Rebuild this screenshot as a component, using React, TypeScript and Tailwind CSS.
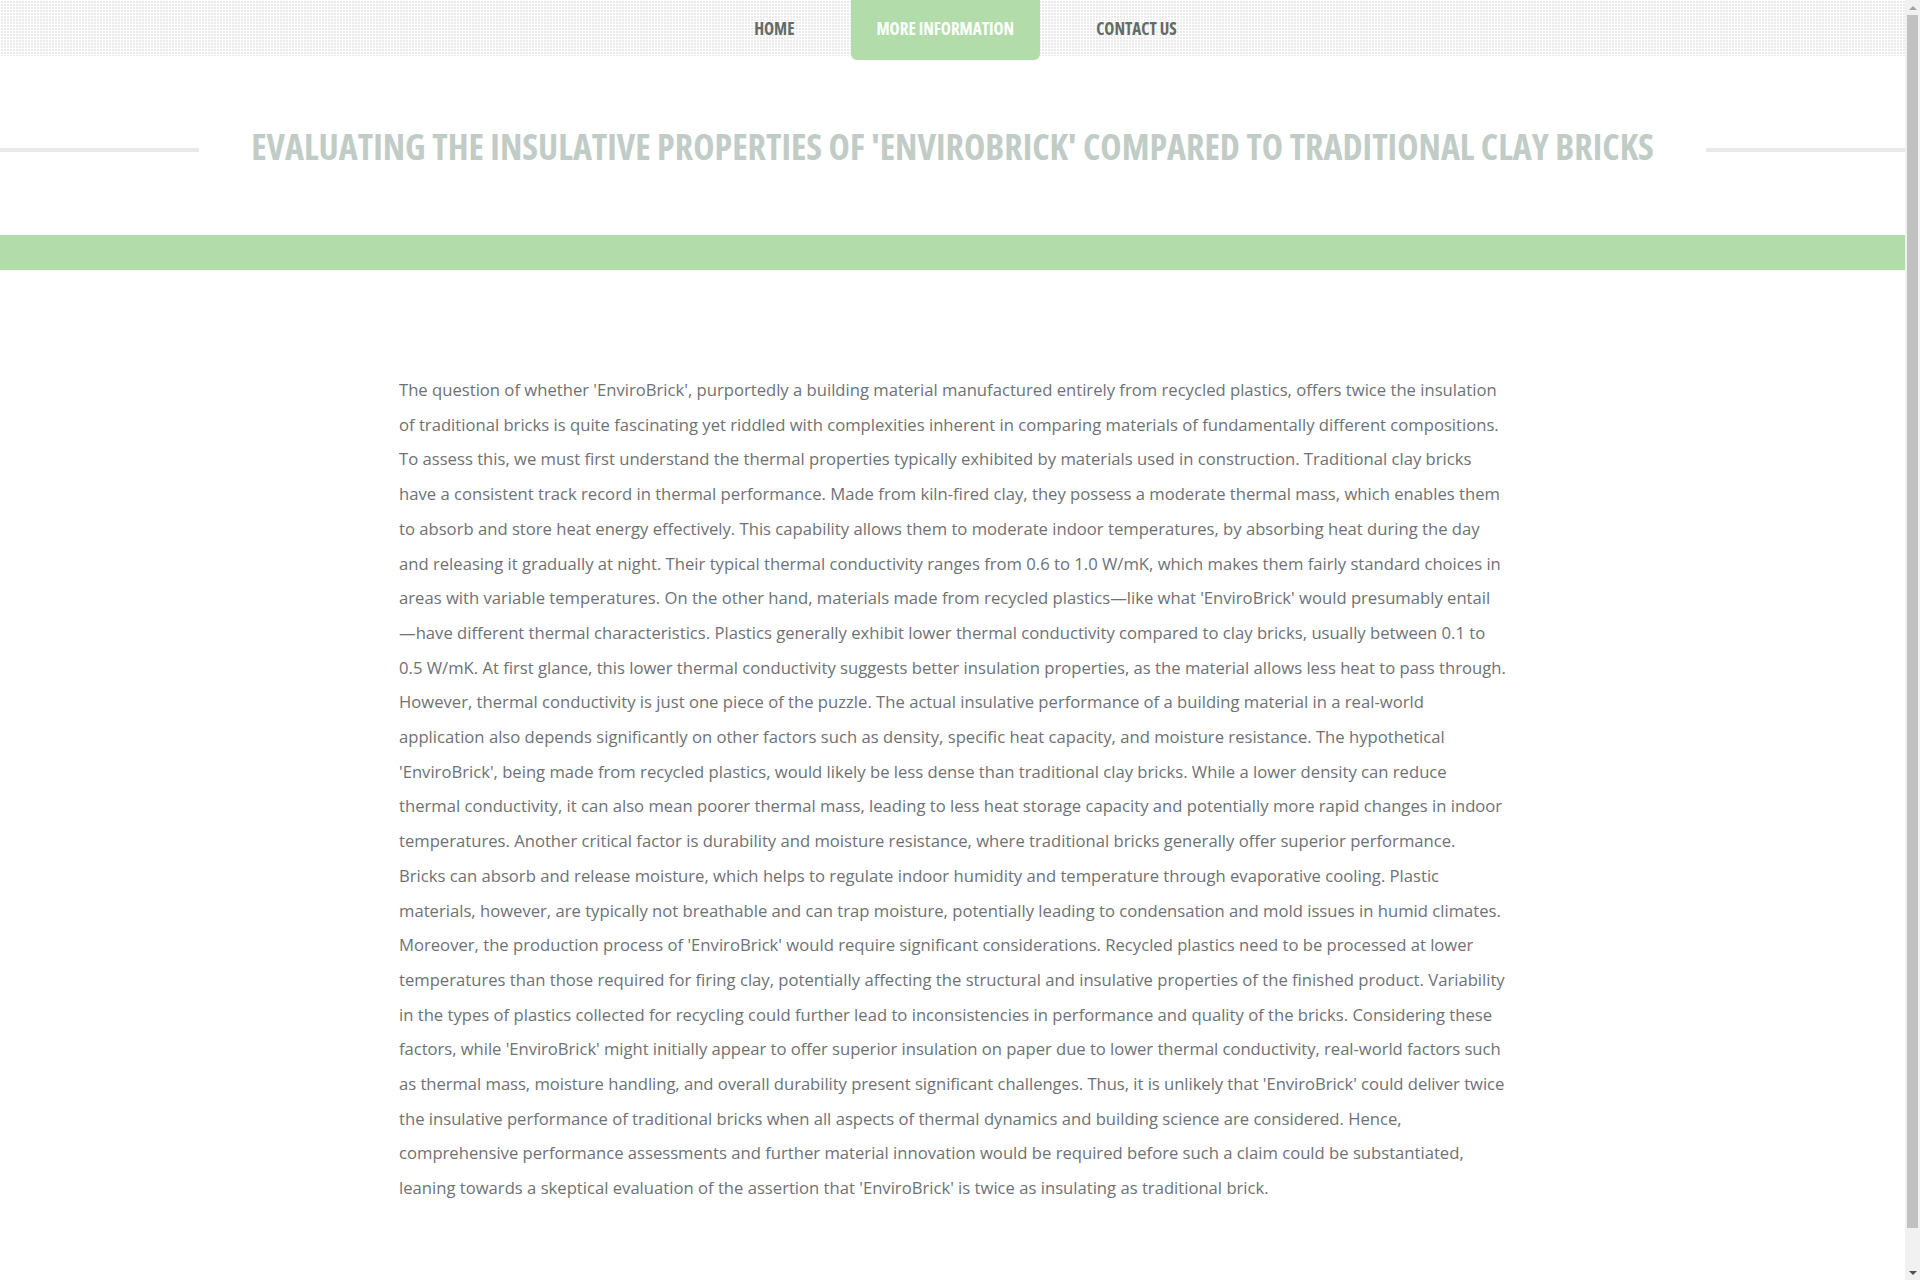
import React from "react";

const navItems = [
  { label: "HOME", active: false },
  { label: "MORE INFORMATION", active: true },
  { label: "CONTACT US", active: false },
];

const bodyStart =
  "The question of whether 'EnviroBrick', purportedly a building material manufactured entirely from recycled plastics, offers twice the insulation of traditional bricks is quite fascinating yet riddled with complexities inherent in comparing materials of fundamentally different compositions. To assess this, we must first understand the thermal properties typically exhibited by materials used in construction. Traditional clay bricks have a consistent track record in thermal performance. Made from kiln-fired clay, they possess a moderate thermal mass, which enables them to absorb and store heat energy effectively. This capability allows them to moderate indoor temperatures, by absorbing heat during the day and releasing it gradually at night. Their typical thermal conductivity ranges from 0.6 to 1.0 W/mK, which makes them fairly standard choices in areas with variable temperatures. On the other hand, materials made from recycled plastics\u2014like what 'EnviroBrick' would presumably entail\u2014\u2060have different thermal characteristics. Plastics generally exhibit lower thermal conductivity compared to clay bricks, usually between 0.1 to 0.5 W/mK. At first glance, this lower thermal conductivity suggests better insulation properties, as the material allows less heat to pass through. However, thermal conductivity is just one piece of the puzzle. The actual insulative performance of a building material in a real-world application also depends significantly on other factors such as density, specific heat capacity, and moisture resistance. The hypothetical 'EnviroBrick', being made from recycled plastics, would likely be less dense than traditional clay bricks. While a lower density can reduce thermal conductivity, it can also mean poorer thermal mass, leading to less heat storage capacity and potentially more rapid changes in indoor temperatures. Another critical factor is durability and moisture resistance, where traditional bricks generally offer superior performance. Bricks can absorb and release moisture, which helps to regulate indoor humidity and temperature through evaporative cooling. Plastic materials, however, are typically not breathable and can trap moisture, potentially leading to condensation and mold issues in humid climates. Moreover, the production process of 'EnviroBrick' would require significant considerations. Recycled plastics need to be processed at lower temperatures than those required for firing clay, potentially affecting the structural and insulative properties of the finished product. Variability in the types of plastics collected for recycling could further lead to inconsistencies in performance and quality of the bricks. Considering these ";

// slightly tighter tracking here so the wrap matches the original rendering
const bodyTight =
  "factors, while 'EnviroBrick' might initially appear to offer superior insulation on paper due to lower thermal conductivity, real-world factors such as thermal mass, moisture handling, and overall durability present significant challenges. Thus, it is unlikely that 'EnviroBrick' could deliver twice";

const bodyEnd =
  " the insulative performance of traditional bricks when all aspects of thermal dynamics and building science are considered. Hence, comprehensive performance assessments and further material innovation would be required before such a claim could be substantiated, leaning towards a skeptical evaluation of the assertion that 'EnviroBrick' is twice as insulating as traditional brick.";

const Scrollbar = () => (
  <aside className="w-[15px] shrink-0 flex flex-col bg-[#f1f1f1]">
    <div className="h-[15px] flex items-center justify-center">
      <div className="w-0 h-0 border-x-[4px] border-x-transparent border-b-[4px] border-b-[#a3a3a3]" />
    </div>
    <div className="h-[1213px] mx-[2px] bg-[#c1c1c1]" />
    <div className="flex-1" />
    <div className="h-[15px] flex items-center justify-center">
      <div className="w-0 h-0 border-x-[4px] border-x-transparent border-t-[4px] border-t-[#505050]" />
    </div>
  </aside>
);

export default function App() {
  return (
    <div className="h-screen flex overflow-hidden bg-white font-['Open_Sans',sans-serif]">
      <div className="flex-1 min-w-0 overflow-hidden">
        {/* Top nav */}
        <header className="h-[56px] bg-[#ebebeb] bg-[image:linear-gradient(to_right,#ffffff_1px,transparent_1px),linear-gradient(to_bottom,#ffffff_1px,transparent_1px)] bg-[size:3px_3px]">
          <nav className="flex justify-center items-start gap-[30px] pl-[26px]">
            {navItems.map((item) => (
              <a
                key={item.label}
                href="#"
                className={
                  item.active
                    ? "h-[60px] pb-[3px] px-[26px] flex items-center bg-[#b2ddab] rounded-b-[6px] text-white text-[17px] font-bold [font-stretch:75%]"
                    : "h-[57px] px-[26px] flex items-center text-[#626c69] text-[17px] font-bold [font-stretch:75%]"
                }
              >
                {item.label}
              </a>
            ))}
          </nav>
        </header>

        {/* Title */}
        <section className="h-[179px] pt-[9px] flex items-center">
          <div className="flex-1 h-[4px] bg-[#e8e9e8]" />
          <h1 className="px-[52px] mb-[6px] text-[#c2ccc7] text-[36px] font-bold [font-stretch:75%] leading-none whitespace-nowrap">
            EVALUATING THE INSULATIVE PROPERTIES OF 'ENVIROBRICK' COMPARED TO TRADITIONAL CLAY BRICKS
          </h1>
          <div className="flex-1 h-[4px] bg-[#e8e9e8]" />
        </section>

        {/* Green band */}
        <div className="h-[35px] bg-[#b2ddab]" />

        {/* Article */}
        <main className="pt-[103px] pb-[115px]">
          <div className="w-[1107px] mx-auto">
            <p className="text-[16.65px] leading-[34.7px] text-[#6e7275]">
              {bodyStart}
              <span className="tracking-[-0.04px]">{bodyTight}</span>
              {bodyEnd}
            </p>
          </div>
        </main>
      </div>
      <Scrollbar />
    </div>
  );
}
